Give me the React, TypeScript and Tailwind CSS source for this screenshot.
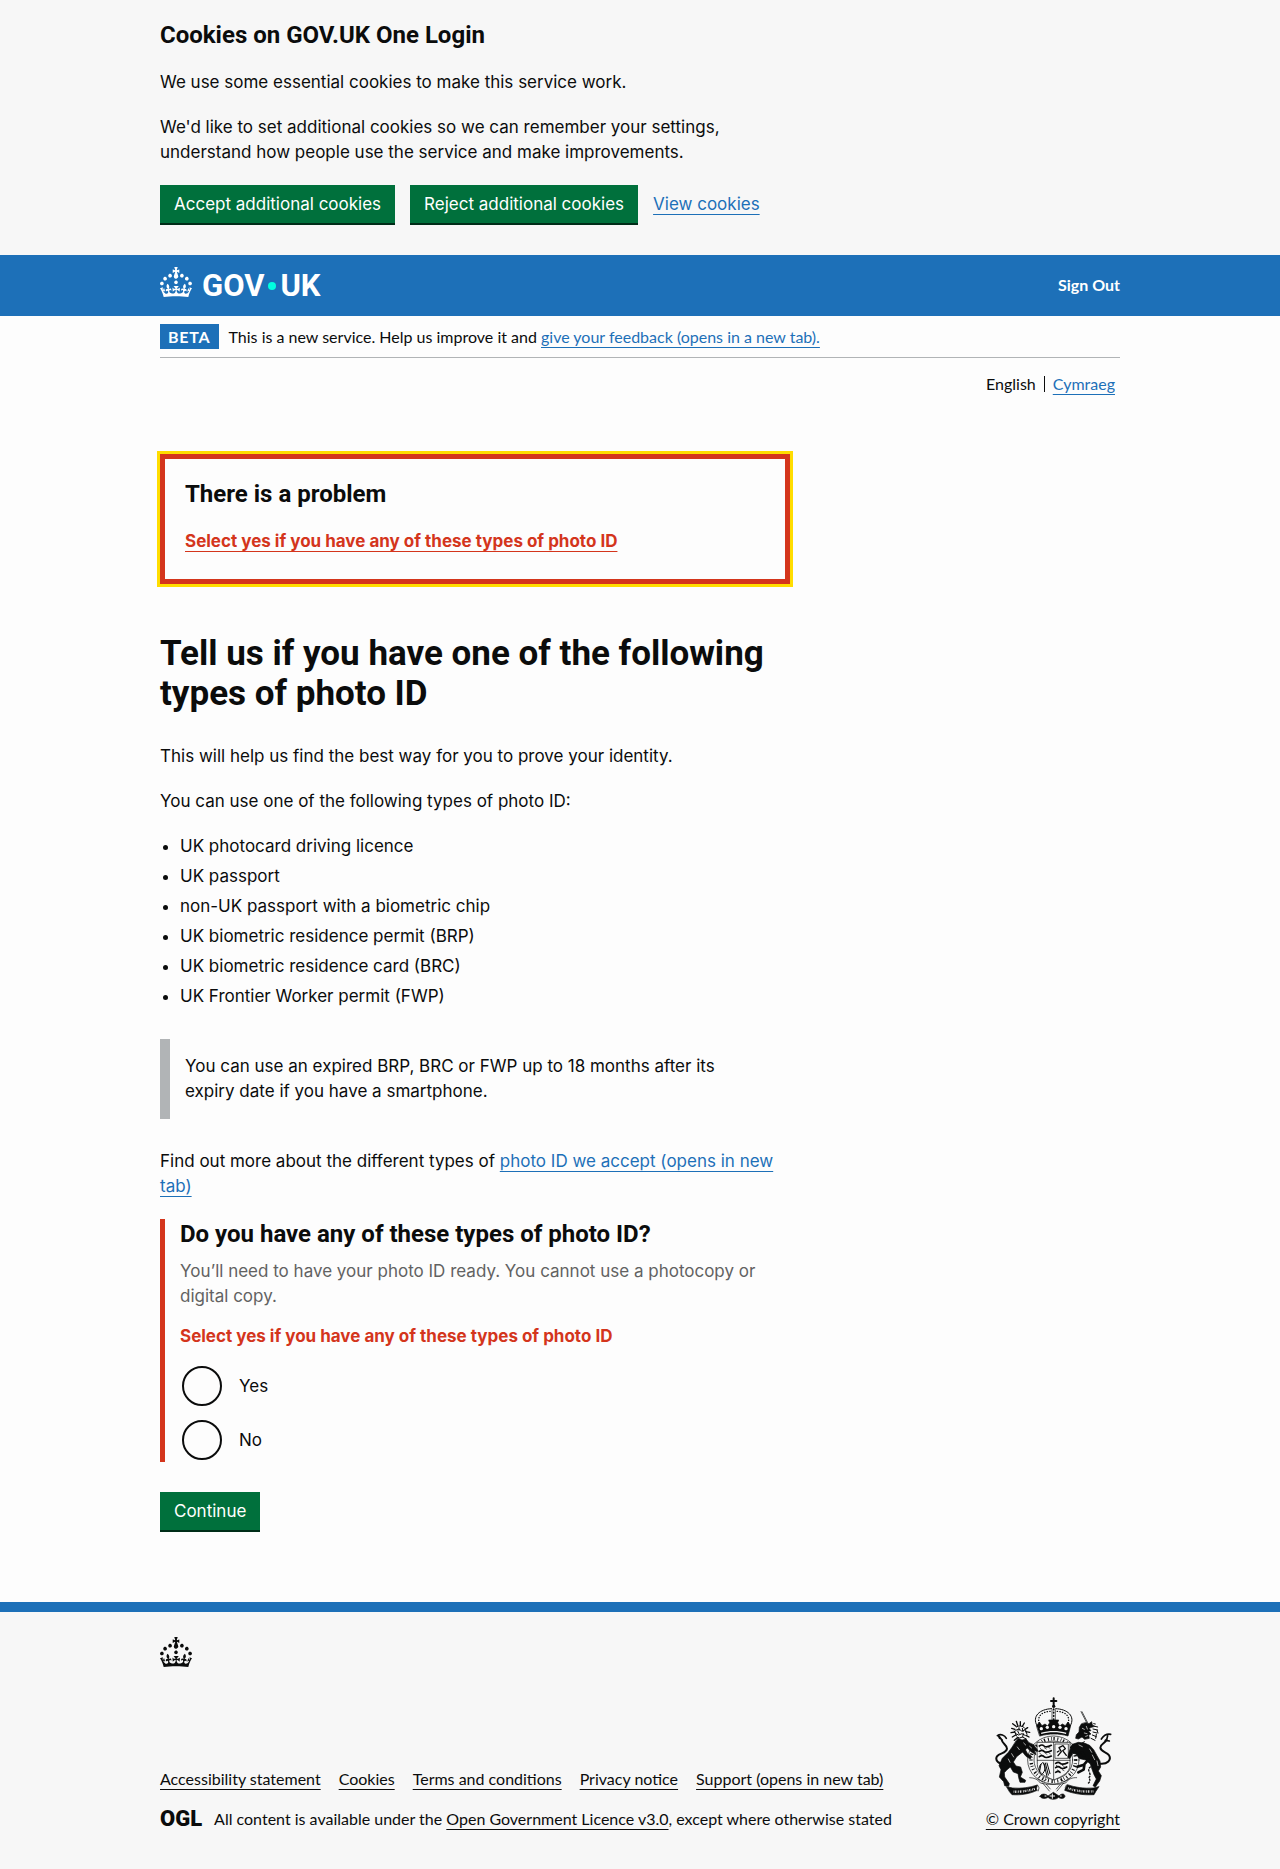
import type { ReactNode } from 'react'

const CROWN =
  'M22.6 10.4c-1 .4-2-.1-2.4-1-.4-.9.1-2 1-2.4.9-.4 2 .1 2.4 1s-.1 2-1 2.4m-5.9 6.7c-.9.4-2-.1-2.4-1-.4-.9.1-2 1-2.4.9-.4 2 .1 2.4 1s-.1 2-1 2.4m10.8-3.7c-1 .4-2-.1-2.4-1-.4-.9.1-2 1-2.4.9-.4 2 .1 2.4 1s0 2-1 2.4m3.3 4.8c-1 .4-2-.1-2.4-1-.4-.9.1-2 1-2.4.9-.4 2 .1 2.4 1s-.1 2-1 2.4M17 4.7l2.3 1.2V2.5l-2.3.7-.2-.2.9-3h-3.4l.9 3-.2.2c-.1.1-2.3-.7-2.3-.7v3.4L15 4.7c.1.1.1.2.2.2l-1.3 4c-.1.2-.1.4-.1.6 0 1.1.8 2 1.9 2.2h.7c1-.2 1.9-1.1 1.9-2.1 0-.2 0-.4-.1-.6l-1.3-4c-.1-.2 0-.2.1-.3m-7.6 5.7c.9.4 2-.1 2.4-1 .4-.9-.1-2-1-2.4-.9-.4-2 .1-2.4 1s0 2 1 2.4m-5 3c.9.4 2-.1 2.4-1 .4-.9-.1-2-1-2.4-.9-.4-2 .1-2.4 1s.1 2 1 2.4m-3.2 4.8c.9.4 2-.1 2.4-1 .4-.9-.1-2-1-2.4-.9-.4-2 .1-2.4 1s0 2 1 2.4m14.8 11c4.4 0 8.6.3 12.3.8 1.1-4.5 2.4-7 3.7-8.8l-2.5-.9c.2 1.3.3 1.9 0 2.7-.4-.4-.8-1.1-1.1-2.3l-1.2 4c.7-.5 1.3-.8 2-.9-1.1 2.5-2.6 3.1-3.5 3-1.1-.2-1.7-1.2-1.5-2.1.3-1.2 1.5-1.5 2.1-.1 1.1-2.3-.8-3-2-2.3 1.9-1.9 2.1-3.5.6-5.6-2.1 1.6-2.1 3.2-1.2 5.5-1.2-1.4-3.2-.6-2.5 1.6.9-1.4 2.1-.5 1.9.8-.2 1.1-1.7 2.1-3.5 1.9-2.7-.2-2.9-2.1-2.9-3.6.7-.1 1.9.5 2.9 1.9l.4-4.3c-1.1 1.1-2.1 1.4-3.2 1.4.4-1.2 2.1-3 2.1-3h-5.4s1.7 1.9 2.1 3c-1.1 0-2.1-.2-3.2-1.4l.4 4.3c1-1.4 2.2-2 2.9-1.9-.1 1.5-.2 3.4-2.9 3.6-1.9.2-3.4-.8-3.5-1.9-.2-1.3 1-2.2 1.9-.8.7-2.3-1.2-3-2.5-1.6.9-2.2.9-3.9-1.2-5.5-1.5 2-1.3 3.7.6 5.6-1.2-.7-3.1 0-2 2.3.6-1.4 1.8-1.1 2.1.1.2.9-.3 1.9-1.5 2.1-.9.2-2.4-.5-3.5-3 .6 0 1.2.3 2 .9l-1.2-4c-.3 1.1-.7 1.9-1.1 2.3-.3-.8-.2-1.4 0-2.7l-2.9.9C1.3 23 2.6 25.5 3.7 30c3.7-.5 7.9-.8 12.3-.8'

function Crown() {
  return (
    <svg viewBox="0 0 32 30" className="h-[30px] w-8 shrink-0" fill="currentColor" aria-hidden="true">
      <path fillRule="evenodd" d={CROWN} />
    </svg>
  )
}

function RoyalArms() {
  return (
    <svg viewBox="75 48 354 309" className="h-[103px] w-[118px]" fill="none" stroke="#0b0c0c" strokeLinecap="round" strokeLinejoin="round" aria-hidden="true">
      {/* orb, cross and crown */}
      <path strokeWidth="6" d="M254 52v22M246 60h16" />
      <circle cx="254" cy="76" r="5" fill="#0b0c0c" stroke="none" />
      <path strokeWidth="3" d="M204 134c-16-28 8-50 44-51M304 134c16-28-8-50-44-51" />
      <path strokeWidth="4" strokeDasharray="1 7" d="M211 126c-8-22 10-34 34-35M297 126c8-22-10-34-34-35" />
      <path strokeWidth="5" d="M254 84v34" strokeDasharray="2 8" />
      <path strokeWidth="2" d="M249 86v34M259 86v34" />
      <path fill="#0b0c0c" strokeWidth="2" d="M203 134l8-11 8 11 9-5 8 6 6-10-3-8h30l-3 8 6 10 8-6 9 5 8-11 8 11-8 31c-26-8-58-8-84 0z" />
      <g fill="#f7f7f7" stroke="none">
        <circle cx="217" cy="143" r="5" /><circle cx="235" cy="139" r="5" /><circle cx="254" cy="137" r="5" />
        <circle cx="273" cy="139" r="5" /><circle cx="291" cy="143" r="5" />
        <path d="M216 155c24-7 52-7 76 0l-1 4c-24-7-50-7-74 0z" />
      </g>
      {/* garter */}
      <ellipse cx="253" cy="237" rx="77" ry="72" strokeWidth="2" />
      <ellipse cx="253" cy="237" rx="58" ry="57" strokeWidth="2" />
      <ellipse cx="253" cy="237" rx="67" ry="64" strokeWidth="10" strokeDasharray="3 7 2 5 4 8" strokeLinecap="butt" />
      {/* quartered shield */}
      <path fill="#f7f7f7" strokeWidth="2" d="M205 184h98v68c0 22-22 34-49 45-27-11-49-23-49-45z" />
      <path strokeWidth="2" d="M254 184v112M205 238h98" />
      <g strokeWidth="5">
        <path d="M211 195q8-6 14 0t22-2M211 211q8-6 14 0t22-2M211 227q8-6 14 0t22-2" />
        <path d="M260 247q8-6 14 0t22-2M260 260q8-6 14 0t19-2M260 274q8-6 13 0" />
      </g>
      <g strokeWidth="2">
        <path d="M213 201l4 4M226 200l6 4M238 198l5 4M213 217l4 4M228 216l6 4M240 215l4 4M262 253l5 4M280 253l6 4M265 267l5 3M280 266l5 3" />
        <path d="M259 189h39v43h-39z" />
      </g>
      <path strokeWidth="4" d="M267 224l10-12-7-12 12-6 7 9-8 6 11 14M270 210l-5 3" />
      <path strokeWidth="3" d="M218 281c-12-10-10-28 3-36 10 6 10 26-3 36M224 246l10 40M229 246l9 36M234 246l9 32M216 250l-4 20" />
      {/* lion */}
      <path strokeWidth="4" d="M131 128l10 8M142 121l4 12M154 122l0 12M166 126l-6 10M128 142l10 3M126 155l12-2M130 168l10-6M176 140l-8 5M182 154l-12-2M180 168l-9-5M136 178l9-8" />
      <path strokeWidth="3" d="M142 138q12-8 24 2M140 148l10-4 8 6 10-3M140 158l9 4 10-4 9 5M144 168l8 3 8-3 12 6M150 140v8M160 142l2 10M146 150l4 8M163 158l-2 10M136 150l6 14M170 148l4 12" />
      <path fill="#0b0c0c" strokeWidth="2" d="M147 172l12 5 12-3 9 11 14 6 14 20-13-2 6 12-14-8-12-12-14 12-18 14-10 16 8 12 14 3 5 16-6 14 16 10-2 6h-15l-4-14-2-12-14-5-9-15-10 8-8 9 1 13 14 20-2 8-12-2-3-12-13-14 5-22-6-12 10-22 18-18 10-14z" />
      <path fill="#0b0c0c" strokeWidth="2" d="M168 204l8 14 12 8-4 8-13-8-11-14z" />
      <path stroke="#f7f7f7" strokeWidth="2" d="M128 218l6 10M145 198l6 8M118 234l5 10M164 186l6 6M182 196l6 5" />
      <path strokeWidth="6" d="M113 250c-24 1-36-12-29-24 8-11 28-8 30-23 0-12-14-14-16-27" />
      <path strokeWidth="5" d="M85 164c10-6 22-2 27 8M88 164l4 8M98 176l-6-8" />
      {/* unicorn */}
      <path strokeWidth="2" d="M336 92l18 35M339 92l17 33" />
      <path fill="#0b0c0c" strokeWidth="2" d="M350 125l10 3 8-6 2 10 8 4-10 3-8 3 6 7-8 2 8 8-7 3 2 10-14 3-8-7-11 6-8-2 2-11 8-8 1-14 6-10z" />
      <path strokeWidth="3" d="M378 136l8 2M372 144l14 3M372 153l12 3M370 162l12 5M366 172l12 6M374 128l5 1M346 182l-6 4M384 148l3 8M382 160l-2 12" />
      <path stroke="#f7f7f7" strokeWidth="2" d="M340 142l6 3M352 136l3 8M346 156l8 2M350 166l6-2" />
      <path fill="#0b0c0c" strokeWidth="2" d="M310 190l18-6 18 2 16 7 12 13 10 18 9 16 2 18-7 12 9 14-5 16-13 18-7-4 10-20-7-13-6-16-5-16-14-12-18-4-12-14-8-2-10 16-6-4 5-18z" />
      <path strokeWidth="8" d="M338 214l8 10M358 236l-13 15-20 6M346 252l-2 14-16 8" />
      <path stroke="#f7f7f7" strokeWidth="2" d="M362 204l6 10M370 222l7 14M384 240l3 14M330 192l10 5" />
      <path strokeWidth="6" d="M392 248c24 3 36-12 28-25-7-11-25-10-26-23 0-12 15-12 19-25" />
      <path strokeWidth="5" d="M425 160c-10-2-20 2-28 14M421 180l-12-2M416 164l-2 8" />
      <path strokeWidth="4" strokeDasharray="4 6" d="M364 258c-14 10 8 22-5 32 8 10 1 14-4 20" />
      {/* motto scroll */}
      <path fill="#0b0c0c" strokeWidth="2" d="M113 317l18 4c26 2 50-1 74-9l-3 12 3 4c-24 11-50 15-76 13l-7-8zM389 317l-16 4c-30 2-54-2-78-10l-6 12-2 5c26 10 53 15 88 13l5-9z" />
      <path stroke="#f7f7f7" strokeWidth="7" strokeLinecap="butt" strokeDasharray="2 3 3 2 1 3" d="M134 332c20 1 44-2 64-9M297 322c24 8 48 11 76 9" />
      <path strokeWidth="2" d="M182 290c14 0 26 6 32 16 22 6 54 6 76 0 8-12 20-17 33-16M206 292l14 10 12-6M300 292l-14 10-12-6M221 306l20 24M284 306l-20 24M232 310l12 14M274 310l-12 14M206 312q8 8 2 18M292 312q-6 8-2 16" />
      <path fill="#0b0c0c" strokeWidth="2" d="M213 346c4-10 18-8 24-1l16-11 17 11c6-7 16-9 18 1-2 8-14 8-19 3-9 8-23 8-32 0-7 5-20 5-24-3z" />
      <path stroke="#f7f7f7" strokeWidth="3" d="M250 339v13M243 345h14M228 345h3M274 345h3" />
    </svg>
  )
}

function Link({ children, tone = 'blue' }: { children: ReactNode; tone?: 'blue' | 'black' }) {
  return (
    <a
      href="#"
      className={
        tone === 'blue'
          ? 'text-[#1d70b8] underline decoration-1 underline-offset-4'
          : 'text-[#0b0c0c] underline decoration-1 underline-offset-4'
      }
    >
      {children}
    </a>
  )
}

function Button({ children }: { children: ReactNode }) {
  return (
    <button type="button" className="h-[38px] bg-[#00703c] px-3.5 text-[17px] leading-[25px] text-white shadow-[0_2px_0_#002d18]">
      {children}
    </button>
  )
}

function Radio({ id, label }: { id: string; label: string }) {
  return (
    <div className="flex h-11 items-center gap-[17px] pl-0.5">
      <input type="radio" id={id} name="photo-id" className="size-10 appearance-none rounded-full border-2 border-[#0b0c0c] bg-transparent checked:shadow-[inset_0_0_0_8px_#fff,inset_0_0_0_20px_#0b0c0c]" />
      <label htmlFor={id}>{label}</label>
    </div>
  )
}

const documents = [
  'UK photocard driving licence',
  'UK passport',
  'non-UK passport with a biometric chip',
  'UK biometric residence permit (BRP)',
  'UK biometric residence card (BRC)',
  'UK Frontier Worker permit (FWP)',
]

const footerLinks = ['Accessibility statement', 'Cookies', 'Terms and conditions', 'Privacy notice', 'Support (opens in new tab)']

export default function App() {
  return (
    <div className="bg-[#fdfdfd] font-['Inter',sans-serif] text-[17px] leading-[25px] text-[#0b0c0c]">
      <section aria-label="Cookies on GOV.UK One Login" className="bg-[#f7f7f7] pt-5 pb-8">
        <div className="mx-auto max-w-[960px]">
          <div className="max-w-[630px]">
            <h2 className="mb-5 font-['Roboto',sans-serif] text-2xl leading-[30px] font-bold">Cookies on GOV.UK One Login</h2>
            <p className="mb-5">We use some essential cookies to make this service work.</p>
            <p className="mb-5">We'd like to set additional cookies so we can remember your settings, understand how people use the service and make improvements.</p>
          </div>
          <div className="flex items-center gap-[15px]">
            <Button>Accept additional cookies</Button>
            <Button>Reject additional cookies</Button>
            <Link>View cookies</Link>
          </div>
        </div>
      </section>

      <header className="bg-[#1d70b8] text-white">
        <div className="mx-auto flex h-[61px] max-w-[960px] items-start justify-between pt-3">
          <a href="#" aria-label="GOV.UK" className="flex gap-2.5">
            <Crown />
            <span className="flex items-center pt-1 font-['Roboto',sans-serif] text-[31px] leading-[30px] font-bold">
              GOV
              <span className="mx-1 size-2 rounded-full bg-[#00ffe0]" />
              UK
            </span>
          </a>
          <a href="#" className="pt-2 font-['Lato',sans-serif] text-base leading-5 font-bold">Sign Out</a>
        </div>
      </header>

      <div className="mx-auto max-w-[960px]">
        <div className="flex items-center gap-2.5 border-b border-[#b1b4b6] py-2 font-['Lato',sans-serif] text-base leading-5">
          <strong className="bg-[#1d70b8] px-2 py-[3px] leading-[19px] font-bold tracking-wider text-white">BETA</strong>
          <span>This is a new service. Help us improve it and <Link>give your feedback (opens in a new tab).</Link></span>
        </div>
        <nav aria-label="Language" className="flex justify-end pt-4 pr-[5px] font-['Lato',sans-serif] text-base leading-5">
          <span className="my-0.5 border-r border-[#0b0c0c] pr-2 leading-4">English</span>
          <span className="pl-2"><Link>Cymraeg</Link></span>
        </nav>

        <main className="max-w-[630px] pt-[60px] pb-[72px]">
          <div role="alert" className="mb-[50px] border-5 border-[#d4351c] px-5 pt-5 pb-[25px] outline-3 outline-[#ffdd00]">
            <h2 className="mb-5 font-['Roboto',sans-serif] text-2xl leading-[30px] font-bold">There is a problem</h2>
            <a href="#yes" className="font-bold text-[#d4351c] underline decoration-1 underline-offset-4">Select yes if you have any of these types of photo ID</a>
          </div>

          <h1 className="mb-[30px] font-['Roboto',sans-serif] text-[35px] leading-10 font-bold">Tell us if you have one of the following types of photo ID</h1>
          <p className="mb-5">This will help us find the best way for you to prove your identity.</p>
          <p className="mb-5">You can use one of the following types of photo ID:</p>
          <ul className="flex list-disc flex-col gap-[5px] pl-5">
            {documents.map((d) => (
              <li key={d}>{d}</li>
            ))}
          </ul>
          <div className="my-[30px] border-l-10 border-[#b1b4b6] py-[15px] pr-10 pl-[15px]">
            You can use an expired BRP, BRC or FWP up to 18 months after its expiry date if you have a smartphone.
          </div>
          <p className="mb-5">Find out more about the different types of <Link>photo ID we accept (opens in new tab)</Link></p>

          <form>
            <fieldset className="mb-[30px] border-l-5 border-[#d4351c] pl-[15px]" aria-describedby="hint error">
              <legend className="float-left mb-2.5 w-full font-['Roboto',sans-serif] text-2xl leading-[30px] font-bold">Do you have any of these types of photo ID?</legend>
              <p id="hint" className="clear-both mb-[15px] text-[#626262]">You’ll need to have your photo ID ready. You cannot use a photocopy or digital copy.</p>
              <p id="error" className="mb-[15px] font-bold text-[#d4351c]">Select yes if you have any of these types of photo ID</p>
              <div className="flex flex-col gap-2.5">
                <Radio id="yes" label="Yes" />
                <Radio id="no" label="No" />
              </div>
            </fieldset>
            <Button>Continue</Button>
          </form>
        </main>
      </div>

      <footer className="border-t-10 border-[#1d70b8] bg-[#f7f7f7] pt-[25px] pb-10 font-['Lato',sans-serif] text-base leading-5">
        <div className="mx-auto max-w-[960px]">
          <Crown />
          <div className="mt-[30px] flex items-end justify-between">
            <div>
              <ul className="mb-5 flex gap-[18px]">
                {footerLinks.map((t) => (
                  <li key={t}><Link tone="black">{t}</Link></li>
                ))}
              </ul>
              <div className="flex items-center gap-3">
                <span className="font-['Roboto',sans-serif] text-[22px] leading-5 font-black">OGL</span>
                <span>All content is available under the <Link tone="black">Open Government Licence v3.0</Link>, except where otherwise stated</span>
              </div>
            </div>
            <div className="flex flex-col items-center gap-[9px]">
              <RoyalArms />
              <Link tone="black">© Crown copyright</Link>
            </div>
          </div>
        </div>
      </footer>
    </div>
  )
}
